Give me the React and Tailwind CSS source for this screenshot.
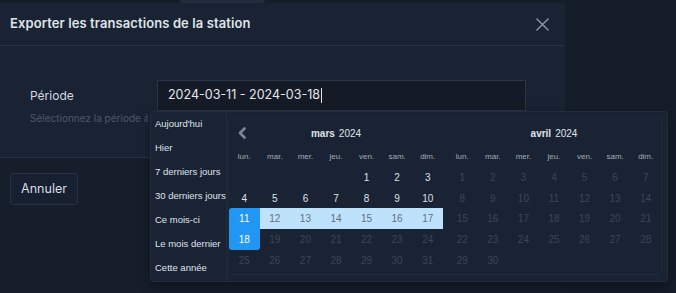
import React from "react";

const dayNames = ["lun.", "mar.", "mer.", "jeu.", "ven.", "sam.", "dim."];
const presets = [
  "Aujourd'hui",
  "Hier",
  "7 derniers jours",
  "30 derniers jours",
  "Ce mois-ci",
  "Le mois dernier",
  "Cette année",
];

function Month({ name, first, days, prev, range }) {
  const cells = [];
  for (let i = 0; i < first; i++) cells.push(null);
  for (let d = 1; d <= days; d++) cells.push(d);
  while (cells.length % 7) cells.push(null);

  return (
    <div className="w-[214px]">
      <div className="relative h-[26px] flex items-center justify-center text-[10px] text-[#dfe4ea]">
        {prev && (
          <svg className="absolute left-[8px] top-[7px] w-[10px] h-[12px]" viewBox="0 0 10 12">
            <path d="M7.5 1.5 L3 6 L7.5 10.5" fill="none" stroke="#7d8796" strokeWidth="2.6" strokeLinecap="round" strokeLinejoin="round" />
          </svg>
        )}
        <span className="font-bold">{name}</span>
        <span className="ml-[4px]">2024</span>
      </div>
      <div className="grid grid-cols-7 h-[17px] mt-[2px] items-center text-[8px] text-[#a3acb8]">
        {dayNames.map((n) => (
          <div key={n} className="text-center">{n}</div>
        ))}
      </div>
      <div className="grid grid-cols-7 mt-[2px]">
        {cells.map((d, i) => {
          let cls = "text-[#3b4658]";
          if (d && range) {
            if (d === 11) cls = "bg-[#2196f3] text-white rounded-tl-[3px] rounded-bl-[1px]";
            else if (d === 18) cls = "bg-[#2196f3] text-white rounded-b-[3px]";
            else if (d >= 12 && d <= 17) cls = "bg-[#bfe2fc] text-[#5f6f84]";
            else if (d < 18) cls = "text-[#dce2e9]";
          }
          return (
            <div key={i} className={`h-[20.7px] flex items-center justify-center text-[10px] ${d ? cls : ""}`}>
              {d}
            </div>
          );
        })}
      </div>
    </div>
  );
}

export default function App() {
  return (
    <div className="relative w-[676px] h-[293px] bg-[#151d29] overflow-hidden" style={{ fontFamily: "Inter, 'Liberation Sans', sans-serif" }}>
      <div className="absolute left-[180px] top-0 w-[85px] h-[3px] bg-[#222c3b] rounded-b" />
      <div className="mt-[3px] w-[565px] h-[290px] bg-[#1a2333] flex flex-col">
        <div className="h-[43px] px-[10px] flex items-center justify-between border-b border-[#283244]">
          <h2 className="text-[13px] font-semibold text-[#dfe4ea] tracking-[0.1px]">Exporter les transactions de la station</h2>
          <svg className="w-[13px] h-[13px] mr-[6px]" viewBox="0 0 14 14">
            <path d="M1 1 L13 13 M13 1 L1 13" stroke="#8a94a3" strokeWidth="1.6" strokeLinecap="round" />
          </svg>
        </div>
        <div className="h-[111px] pt-[34px] px-[30px]">
          <div className="flex items-center">
            <label className="w-[127px] text-[12px] text-[#d3d9e1]">Période</label>
            <div className="w-[369px] h-[31px] bg-[#141b26] border border-[#2b3548] flex items-center px-[10px] text-[12.5px] text-[#e3e7ec]">
              2024-03-11 - 2024-03-18
              <span className="w-px h-[15px] bg-[#e3e7ec] ml-px" />
            </div>
          </div>
          <p className="w-[118px] overflow-hidden whitespace-nowrap text-[10px] text-[#4d586a]">Sélectionnez la période à exporter</p>
        </div>
        <div className="flex-1 bg-[#161e2b] border-t border-[#283244] px-[10px] pt-[15px]">
          <button className="h-[32px] w-[68px] border border-[#283244] rounded-[3px] text-[12.5px] text-[#d6dce3] bg-[#172030]">
            Annuler
          </button>
        </div>
      </div>

      <div className="absolute left-[150px] top-[111px] w-[518px] h-[171px] bg-[#1a2333] border border-[#222c3c] rounded-[3px] flex shadow-[0_4px_12px_rgba(0,0,0,0.35)]" style={{ fontFamily: "'Liberation Sans', Arial, sans-serif" }}>
        <ul className="w-[76px] border-r border-[#222c3c] pt-[5px] pl-[4px] text-[9.5px] text-[#dfe4ea] whitespace-nowrap">
          {presets.map((p) => (
            <li key={p} className="h-[24px] leading-[14px]">{p}</li>
          ))}
        </ul>
        <div className="flex-1 flex pl-[1px] pr-[5px] pt-[6px] pb-[6px]">
          <div className="flex gap-[4px] border border-[#1f2939] rounded-[3px] w-full pt-[1px]">
            <Month name="mars" first={4} days={31} prev range />
            <Month name="avril" first={0} days={30} />
          </div>
        </div>
      </div>
    </div>
  );
}
